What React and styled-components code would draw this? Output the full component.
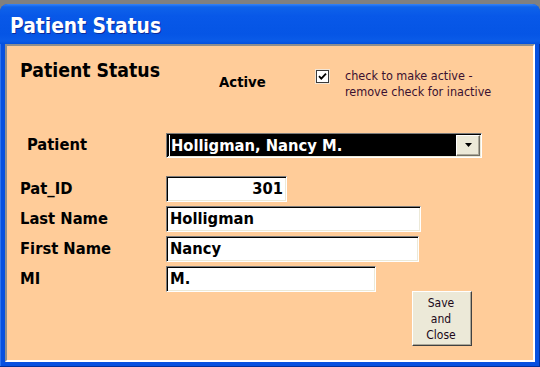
import React from "react";
import styled, { createGlobalStyle } from "styled-components";

const Global = createGlobalStyle`
  html, body { margin: 0; padding: 0; background: #808080; }
  body {
    width: 540px;
    height: 367px;
    overflow: hidden;
    font-family: "DejaVu Sans Condensed", "DejaVu Sans", sans-serif;
    color: #000;
  }
`;

const Window = styled.div`
  margin-top: 4px;
  height: 363px;
  display: flex;
  flex-direction: column;
  border-radius: 8px 8px 0 0;
  overflow: hidden;
  background: #0650e0;
`;

const TitleBar = styled.div`
  height: 40px;
  flex: none;
  box-sizing: border-box;
  padding: 3px 0 0 10px;
  display: flex;
  align-items: center;
  background: linear-gradient(
    180deg,
    #3583f6 0px,
    #0e62ea 3px,
    #0858e8 12px,
    #0555e5 30px,
    #0a5be8 37px,
    #0350dd 40px
  );
  color: #fff;
  font-weight: bold;
  font-size: 20.8px;
  text-shadow: 1px 1px 0 #0c2a9a;
`;

const Frame = styled.div`
  flex: 1;
  display: flex;
  padding: 0 5px 5px;
  background: #0650e0;
  box-shadow: inset 0 -1px 0 #00309a, inset -1px 0 0 #00309a,
    inset 1px 0 0 #2e74f0;
`;

const Body = styled.div`
  flex: 1;
  display: flex;
  flex-direction: column;
  padding: 13px 0 0 13px;
  background: #ffcc99;
  border-style: solid;
  border-width: 2px;
  border-color: #8e8e8e #ffffff #ffffff #8e8e8e;
`;

const Header = styled.div`
  display: grid;
  grid-template-columns: 199px 97px 29px 1fr;
  align-items: start;
`;

const Heading = styled.div`
  font-weight: bold;
  font-size: 19.3px;
  line-height: 23px;
`;

const ActiveLabel = styled.div`
  margin-top: 14px;
  font-weight: bold;
  font-size: 14.8px;
  line-height: 18px;
`;

const CheckBox = styled.div`
  margin-top: 11px;
  width: 13px;
  height: 13px;
  box-sizing: border-box;
  background: #fff;
  border: 1px solid #3a3a3a;
  box-shadow: 0 0 0 1px #f3e6d6;
  display: flex;
  align-items: center;
  justify-content: center;
`;

const Help = styled.div`
  margin-top: 9px;
  font-size: 12.5px;
  line-height: 16px;
  color: #3a1030;
`;

const PatientRow = styled.div`
  margin-top: 32px;
  display: grid;
  grid-template-columns: 146px 316px;
  align-items: center;
  height: 25px;
`;

const Label = styled.div`
  padding-left: ${(p) => p.$indent || 0}px;
  font-weight: bold;
  font-size: 16.4px;
  line-height: 26px;
  white-space: nowrap;
`;

const Sunken = styled.div`
  box-sizing: border-box;
  border-style: solid;
  border-width: 1px;
  border-color: #7a7a7a #ffffff #ffffff #7a7a7a;
  box-shadow: inset 1px 1px 0 #000, inset -1px -1px 0 #ece9d8;
`;

const Combo = styled(Sunken)`
  height: 25px;
  display: flex;
  align-items: stretch;
  padding: 1px 1px 1px 2px;
  background: #000;
  color: #fff;
  font-weight: bold;
  font-size: 16.4px;
`;

const ComboText = styled.div`
  flex: 1;
  display: flex;
  align-items: center;
  border-left: 1px solid #fff;
  padding-left: 1px;
  line-height: 21px;
  white-space: nowrap;
`;

const DropButton = styled.div`
  width: 24px;
  box-sizing: border-box;
  background: #ece9d8;
  border-style: solid;
  border-width: 1px;
  border-color: #ffffff #716f64 #716f64 #ffffff;
  box-shadow: inset -1px -1px 0 #aca899;
  display: flex;
  align-items: center;
  justify-content: center;
`;

const Fields = styled.div`
  margin-top: 19px;
  display: flex;
  flex-direction: column;
  gap: 4px;
`;

const FieldRow = styled.div`
  display: grid;
  grid-template-columns: 146px auto;
  justify-content: start;
  align-items: center;
  height: 26px;
`;

const Input = styled(Sunken)`
  width: ${(p) => p.$w}px;
  height: 26px;
  padding: 0 3px 0 3px;
  background: #fff;
  font-weight: bold;
  font-size: 16.4px;
  line-height: 24px;
  text-align: ${(p) => (p.$right ? "right" : "left")};
  white-space: nowrap;
`;

const ButtonRow = styled.div`
  margin-top: -1px;
  padding-left: 392px;
  display: flex;
`;

const Button = styled.div`
  width: 60px;
  height: 55px;
  box-sizing: border-box;
  background: #ece9d8;
  border-style: solid;
  border-width: 1px;
  border-color: #ffffff #404040 #404040 #ffffff;
  box-shadow: inset -1px -1px 0 #aca899;
  display: flex;
  align-items: center;
  justify-content: center;
  text-align: center;
  font-size: 12px;
  line-height: 16px;
  color: #200818;
  padding-right: 2px;
`;

const fields = [
  { label: "Pat_ID", value: "301", w: 121, right: true },
  { label: "Last Name", value: "Holligman", w: 255 },
  { label: "First Name", value: "Nancy", w: 253 },
  { label: "MI", value: "M.", w: 210 },
];

export default function App() {
  return (
    <>
      <Global />
      <Window>
        <TitleBar>Patient Status</TitleBar>
        <Frame>
          <Body>
            <Header>
              <Heading>Patient Status</Heading>
              <ActiveLabel>Active</ActiveLabel>
              <CheckBox>
                <svg width="9" height="9" viewBox="0 0 9 9">
                  <path
                    d="M1 4.2 L3.3 6.6 L8 1.6"
                    fill="none"
                    stroke="#000"
                    strokeWidth="1.8"
                  />
                </svg>
              </CheckBox>
              <Help>
                check to make active -
                <br />
                remove check for inactive
              </Help>
            </Header>
            <PatientRow>
              <Label $indent={7}>Patient</Label>
              <Combo>
                <ComboText>Holligman, Nancy M.</ComboText>
                <DropButton>
                  <svg width="7" height="4" viewBox="0 0 7 4">
                    <path d="M0 0 H7 L3.5 4 Z" fill="#000" />
                  </svg>
                </DropButton>
              </Combo>
            </PatientRow>
            <Fields>
              {fields.map((f) => (
                <FieldRow key={f.label}>
                  <Label>{f.label}</Label>
                  <Input $w={f.w} $right={f.right}>
                    {f.value}
                  </Input>
                </FieldRow>
              ))}
            </Fields>
            <ButtonRow>
              <Button>
                Save
                <br />
                and
                <br />
                Close
              </Button>
            </ButtonRow>
          </Body>
        </Frame>
      </Window>
    </>
  );
}
